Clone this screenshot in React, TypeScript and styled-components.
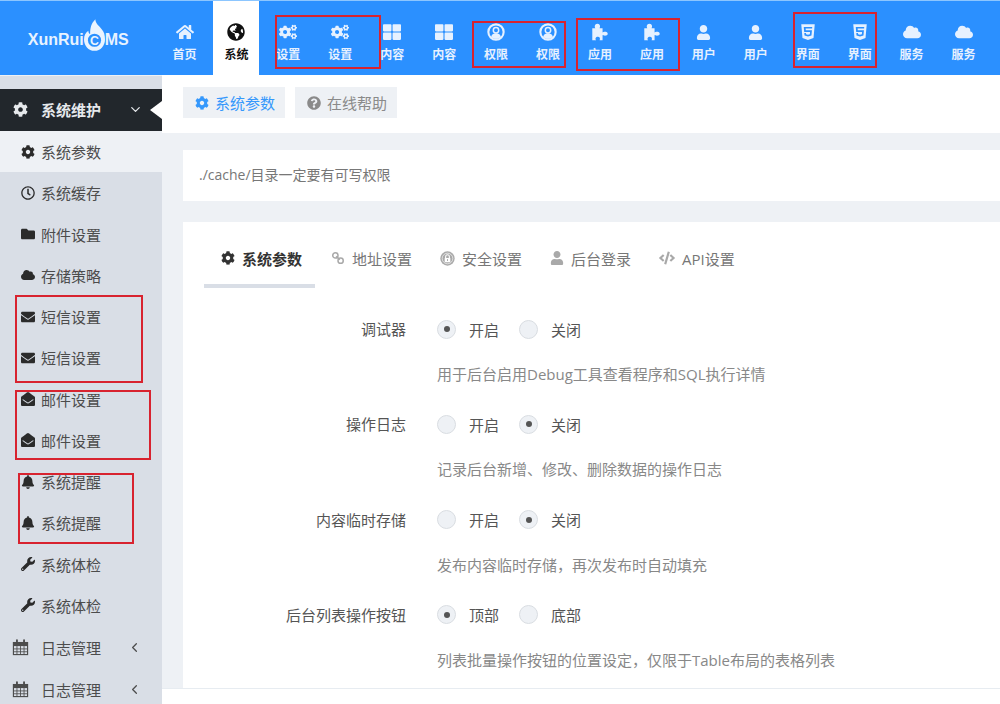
import { createGlobalStyle, styled } from "styled-components";
import { ReactNode } from "react";
import { ChevronDown, ChevronLeft } from "lucide-react";
import {
  FaBell, FaCloud, FaCode, FaCog, FaCogs, FaEnvelope, FaEnvelopeOpen, FaFolder,
  FaGlobeAmericas, FaHome, FaHtml5, FaQuestionCircle, FaRegClock, FaThLarge,
  FaUser, FaWrench,
} from "react-icons/fa";

const Global = createGlobalStyle`
  html, body { margin: 0; padding: 0; background: #fff; }
  body { font-family: "Open Sans", "Noto Sans CJK SC", sans-serif; overflow: hidden; }
`;

const UserRing = () => (
  <svg width="1em" height="1em" viewBox="0 0 24 24">
    <circle cx="12" cy="12" r="10.2" fill="none" stroke="currentColor" strokeWidth="2.8" />
    <circle cx="12" cy="9.6" r="3.6" fill="none" stroke="currentColor" strokeWidth="2" />
    <path d="M5.5 18.5c1-3.6 3.6-4.7 6.5-4.7s5.500 1.100 6.500 4.700c-3.500 3.200-9.500 3.200-13 0z" fill="currentColor" />
  </svg>
);

const Puzzle = () => (
  <svg width="1em" height="1em" viewBox="2 1 20 21">
    <path
      d="M3 7h3.500C5.500 6 5.500 2 9 2s3.500 4 2.500 5H15v5c1-1 6-1.500 6 1.500s-5 2.500-6 1.500v6h-3.500c1-1.500.5-4-2-4s-3.500 2.500-2 4H3z"
      fill="currentColor"
    />
  </svg>
);

const LinkRings = () => (
  <svg width="1em" height="1em" viewBox="0 0 24 24" fill="none" stroke="currentColor" strokeWidth="2.600">
    <circle cx="7.500" cy="7.500" r="4.500" />
    <circle cx="16.500" cy="16.500" r="4.500" />
    <path d="M9 9l6 6" />
  </svg>
);

const LockBadge = () => (
  <svg width="15" height="15" viewBox="0 0 24 24">
    <circle cx="12" cy="12" r="11.500" fill="currentColor" />
    <circle cx="12" cy="12" r="8.500" fill="none" stroke="#fff" strokeWidth="1" />
    <path d="M9 11V9a3 3 0 0 1 6 0v2" fill="none" stroke="#fff" strokeWidth="1.800" />
    <rect x="7.500" y="11" width="9" height="7" rx="1" fill="#fff" />
    <rect x="11.200" y="13" width="1.600" height="3" fill="currentColor" />
  </svg>
);

const CalendarGrid = () => (
  <svg width="1em" height="1em" viewBox="0 0 24 24">
    <rect x="2" y="5" width="20" height="17" fill="none" stroke="currentColor" strokeWidth="1.600" />
    <rect x="2" y="5" width="20" height="5" fill="currentColor" />
    <path d="M2 14h20M2 18h20M7 10v12M12 10v12M17 10v12" fill="none" stroke="currentColor" strokeWidth="1.200" />
    <path d="M7 1.500v5M17 1.500v5" fill="none" stroke="currentColor" strokeWidth="2.600" strokeLinecap="round" />
  </svg>
);

const navItems: [ReactNode, string][] = [
  [<FaHome />, "首页"],
  [<FaGlobeAmericas />, "系统"],
  [<FaCogs />, "设置"],
  [<FaCogs />, "设置"],
  [<FaThLarge />, "内容"],
  [<FaThLarge />, "内容"],
  [<UserRing />, "权限"],
  [<UserRing />, "权限"],
  [<Puzzle />, "应用"],
  [<Puzzle />, "应用"],
  [<FaUser size={15} />, "用户"],
  [<FaUser size={15} />, "用户"],
  [<FaHtml5 />, "界面"],
  [<FaHtml5 />, "界面"],
  [<FaCloud />, "服务"],
  [<FaCloud />, "服务"],
];

const sideItems: [ReactNode, string][] = [
  [<FaCog />, "系统参数"],
  [<FaRegClock />, "系统缓存"],
  [<FaFolder />, "附件设置"],
  [<FaCloud />, "存储策略"],
  [<FaEnvelope />, "短信设置"],
  [<FaEnvelope />, "短信设置"],
  [<FaEnvelopeOpen />, "邮件设置"],
  [<FaEnvelopeOpen />, "邮件设置"],
  [<FaBell />, "系统提醒"],
  [<FaBell />, "系统提醒"],
  [<FaWrench />, "系统体检"],
  [<FaWrench />, "系统体检"],
];

const tabs: [ReactNode, string][] = [
  [<FaCog />, "系统参数"],
  [<LinkRings />, "地址设置"],
  [<LockBadge />, "安全设置"],
  [<FaUser size={14} />, "后台登录"],
  [<FaCode size={16} />, "API设置"],
];

const rows = [
  { label: "调试器", a: "开启", b: "关闭", on: 0, help: "用于后台启用Debug工具查看程序和SQL执行详情" },
  { label: "操作日志", a: "开启", b: "关闭", on: 1, help: "记录后台新增、修改、删除数据的操作日志" },
  { label: "内容临时存储", a: "开启", b: "关闭", on: 1, help: "发布内容临时存储，再次发布时自动填充" },
  { label: "后台列表操作按钮", a: "顶部", b: "底部", on: 0, help: "列表批量操作按钮的位置设定，仅限于Table布局的表格列表" },
];

// 图上的红框标注
const marks = [
  { x: 275, y: 15, w: 106, h: 54 },
  { x: 472, y: 21, w: 94, h: 47 },
  { x: 576, y: 18, w: 104, h: 53 },
  { x: 793, y: 12, w: 84, h: 56 },
  { x: 15, y: 295, w: 128, h: 88 },
  { x: 15, y: 390, w: 136, h: 70 },
  { x: 18, y: 473, w: 116, h: 71 },
];

export default function App() {
  return (
    <Page>
      <Global />
      <Header>
        <Logo>
          XunRui
          <Flame viewBox="0 0 24 36">
            <path d="M13 0c0 5 4 7 7 11 3 3 4 7 4 12 0 7-5 13-12 13S0 30 0 23c0-5 2-8 5-10 0 2 .5 3 2 4 0-7 1-12 6-17z" fill="#eaf4ff" />
            <circle cx="12" cy="24" r="7.500" fill="#2b90ff" />
            <text x="12" y="29" textAnchor="middle" fontSize="14" fontWeight="700" fill="#eaf4ff" fontFamily="Liberation Sans, sans-serif">C</text>
          </Flame>
          MS
        </Logo>
        <Nav>
          {navItems.map(([icon, text], i) => (
            <NavItem key={i} $active={i === 1}>
              <NavIcon>{icon}</NavIcon>
              {text}
            </NavItem>
          ))}
        </Nav>
      </Header>
      <Body>
        <Side>
          <SideHead>
            <FaCog />
            <span>系统维护</span>
            <ChevronDown size={15} strokeWidth={2} />
          </SideHead>
          {sideItems.map(([icon, text], i) => (
            <SideItem key={i} $active={i === 0}>
              <SideIcon>{icon}</SideIcon>
              {text}
            </SideItem>
          ))}
          <SideGroup>
            <CalendarGrid />
            <span>日志管理</span>
            <ChevronLeft size={15} strokeWidth={2} />
          </SideGroup>
          <SideGroup>
            <CalendarGrid />
            <span>日志管理</span>
            <ChevronLeft size={15} strokeWidth={2} />
          </SideGroup>
        </Side>
        <Main>
          <Content>
            <Toolbar>
              <ToolButton $primary>
                <FaCog />
                系统参数
              </ToolButton>
              <ToolButton>
                <FaQuestionCircle />
                在线帮助
              </ToolButton>
            </Toolbar>
            <Notice>./cache/目录一定要有可写权限</Notice>
            <Card>
              <Tabs>
                {tabs.map(([icon, text], i) => (
                  <Tab key={i} $active={i === 0}>
                    {icon}
                    {text}
                  </Tab>
                ))}
              </Tabs>
              {rows.map((r) => (
                <Row key={r.label}>
                  <Label>{r.label}</Label>
                  <Field>
                    <Radios>
                      <Radio $on={r.on === 0} />
                      <RadioText>{r.a}</RadioText>
                      <Radio $on={r.on === 1} />
                      <RadioText>{r.b}</RadioText>
                    </Radios>
                    <Help>{r.help}</Help>
                  </Field>
                </Row>
              ))}
            </Card>
          </Content>
          <Footer />
        </Main>
      </Body>
      {marks.map((m, i) => (
        <Mark key={i} style={{ left: m.x, top: m.y, width: m.w, height: m.h }} />
      ))}
    </Page>
  );
}

const Page = styled.div`
  position: relative;
  width: 1000px;
  height: 704px;
  overflow: hidden;
`;

const Header = styled.header`
  display: flex;
  height: 75px;
  background: #2b90ff;
  border-top: 1px solid #8cc6ff;
  box-sizing: border-box;
`;

const Logo = styled.div`
  width: 161.5px;
  flex: none;
  display: flex;
  align-items: center;
  justify-content: center;
  padding: 4px 5px 0 0;
  box-sizing: border-box;
  color: #e8f3ff;
  font: 700 16px "Liberation Sans", sans-serif;
`;

const Flame = styled.svg`
  width: 21px;
  height: 32px;
  margin: -11px 0 0 0;
`;

const Nav = styled.nav`
  display: flex;
  gap: 5.95px;
`;

const NavItem = styled.a<{ $active?: boolean }>`
  width: 46px;
  display: flex;
  flex-direction: column;
  align-items: center;
  padding-top: 20px;
  box-sizing: border-box;
  font-size: 12px;
  font-weight: 700;
  line-height: 16px;
  white-space: nowrap;
  color: ${(p) => (p.$active ? "#111" : "#e6f1ff")};
  background: ${(p) => (p.$active ? "#fff" : "transparent")};
`;

const NavIcon = styled.span`
  height: 22px;
  margin-bottom: 4px;
  display: flex;
  align-items: center;
  font-size: 18px;
`;

const Body = styled.div`
  display: flex;
  height: 629px;
`;

const Side = styled.aside`
  width: 162px;
  flex: none;
  padding-top: 13px;
  background: #d9dee6;
  border-top: 1px solid #eef1f5;
  box-sizing: border-box;
`;

const SideHead = styled.div`
  position: relative;
  display: flex;
  align-items: center;
  height: 42px;
  padding: 0 19px 2px 13px;
  box-sizing: border-box;
  background: #22272c;
  color: #e6e9ec;
  font-size: 15px;
  font-weight: 700;

  span {
    flex: 1;
    margin-left: 13px;
  }

  &::after {
    content: "";
    position: absolute;
    right: 0;
    top: 12px;
    border: 9px solid transparent;
    border-right: 12px solid #fff;
    border-left: 0;
  }
`;

const SideItem = styled.div<{ $active?: boolean }>`
  display: flex;
  align-items: center;
  height: 41.25px;
  padding-left: 21px;
  font-size: 15px;
  color: #4c4c4c;
  background: ${(p) => (p.$active ? "#eef1f5" : "transparent")};
`;

const SideIcon = styled.span`
  width: 20px;
  display: flex;
  font-size: 14px;
  color: #2b2b2b;
`;

const SideGroup = styled.div`
  display: flex;
  align-items: center;
  height: 41px;
  padding: 1px 20px 0 12px;
  font-size: 15px;
  color: #4c4c4c;

  svg:first-child {
    font-size: 17px;
  }

  span {
    flex: 1;
    margin-left: 12px;
  }
`;

const Main = styled.main`
  flex: 1;
  display: flex;
  flex-direction: column;
  min-width: 0;
`;

const Content = styled.div`
  flex: 1;
  display: flex;
  flex-direction: column;
  min-height: 0;
  padding-left: 21px;
  background: #eef1f5;
`;

const Toolbar = styled.div`
  display: flex;
  gap: 10px;
  flex: none;
  height: 58px;
  padding: 12px 0 0 21px;
  margin-left: -21px;
  box-sizing: border-box;
  background: #fff;
`;

const ToolButton = styled.div<{ $primary?: boolean }>`
  display: flex;
  align-items: center;
  gap: 6px;
  width: 102px;
  height: 31px;
  padding-left: 12px;
  box-sizing: border-box;
  background: #eef1f5;
  font-size: 15px;
  color: ${(p) => (p.$primary ? "#3598fc" : "#8a8a8a")};

  svg {
    font-size: 14px;
  }
`;

const Notice = styled.div`
  flex: none;
  height: 51px;
  margin-top: 17px;
  padding: 0 0 3px 16px;
  box-sizing: border-box;
  display: flex;
  align-items: center;
  background: #fff;
  font-size: 14px;
  color: #777;
`;

const Card = styled.section`
  flex: 1;
  margin-top: 21px;
  padding-left: 21px;
  background: #fff;
  overflow: hidden;
`;

const Tabs = styled.div`
  display: flex;
  height: 66px;
`;

const Tab = styled.div<{ $active?: boolean }>`
  display: flex;
  align-items: center;
  gap: 7px;
  height: 50px;
  padding: 11px 14px 1px;
  font-size: 15px;
  font-weight: ${(p) => (p.$active ? 700 : 400)};
  color: ${(p) => (p.$active ? "#333" : "#777")};
  border-bottom: 4px solid ${(p) => (p.$active ? "#d9dee6" : "transparent")};

  &:first-child {
    padding: 11px 13px 1px 17px;
    margin-right: 2px;
  }

  svg {
    font-size: 14px;
    color: ${(p) => (p.$active ? "#333" : "#a9a9a9")};
  }
`;

const Row = styled.div`
  display: flex;
  height: 95.3px;
  padding-top: 31px;
  box-sizing: border-box;
`;

const Label = styled.div`
  width: 202px;
  flex: none;
  line-height: 20px;
  text-align: right;
  font-size: 15px;
  color: #555;
`;

const Field = styled.div`
  padding-left: 31px;
`;

const Radios = styled.div`
  display: flex;
  align-items: center;
  height: 20px;
`;

const Radio = styled.span<{ $on?: boolean }>`
  position: relative;
  width: 19px;
  height: 19px;
  flex: none;
  margin-right: 13px;
  border-radius: 50%;
  background: #eef1f5;
  border: 1px solid #d9dde2;
  box-sizing: border-box;

  &::after {
    content: "";
    display: ${(p) => (p.$on ? "block" : "none")};
    position: absolute;
    top: 5.5px;
    left: 5.5px;
    width: 6px;
    height: 6px;
    border-radius: 50%;
    background: #555;
  }
`;

const RadioText = styled.span`
  width: 50px;
  font-size: 15px;
  color: #555;
`;

const Help = styled.div`
  margin-top: 25px;
  line-height: 20px;
  font-size: 15px;
  color: #888;
  white-space: nowrap;
`;

const Footer = styled.footer`
  flex: none;
  height: 16px;
  box-sizing: border-box;
  background: #fff;
  border-top: 1px solid #e7ecf1;
`;

const Mark = styled.div`
  position: absolute;
  box-sizing: border-box;
  border: 2px solid #d8232f;
`;
